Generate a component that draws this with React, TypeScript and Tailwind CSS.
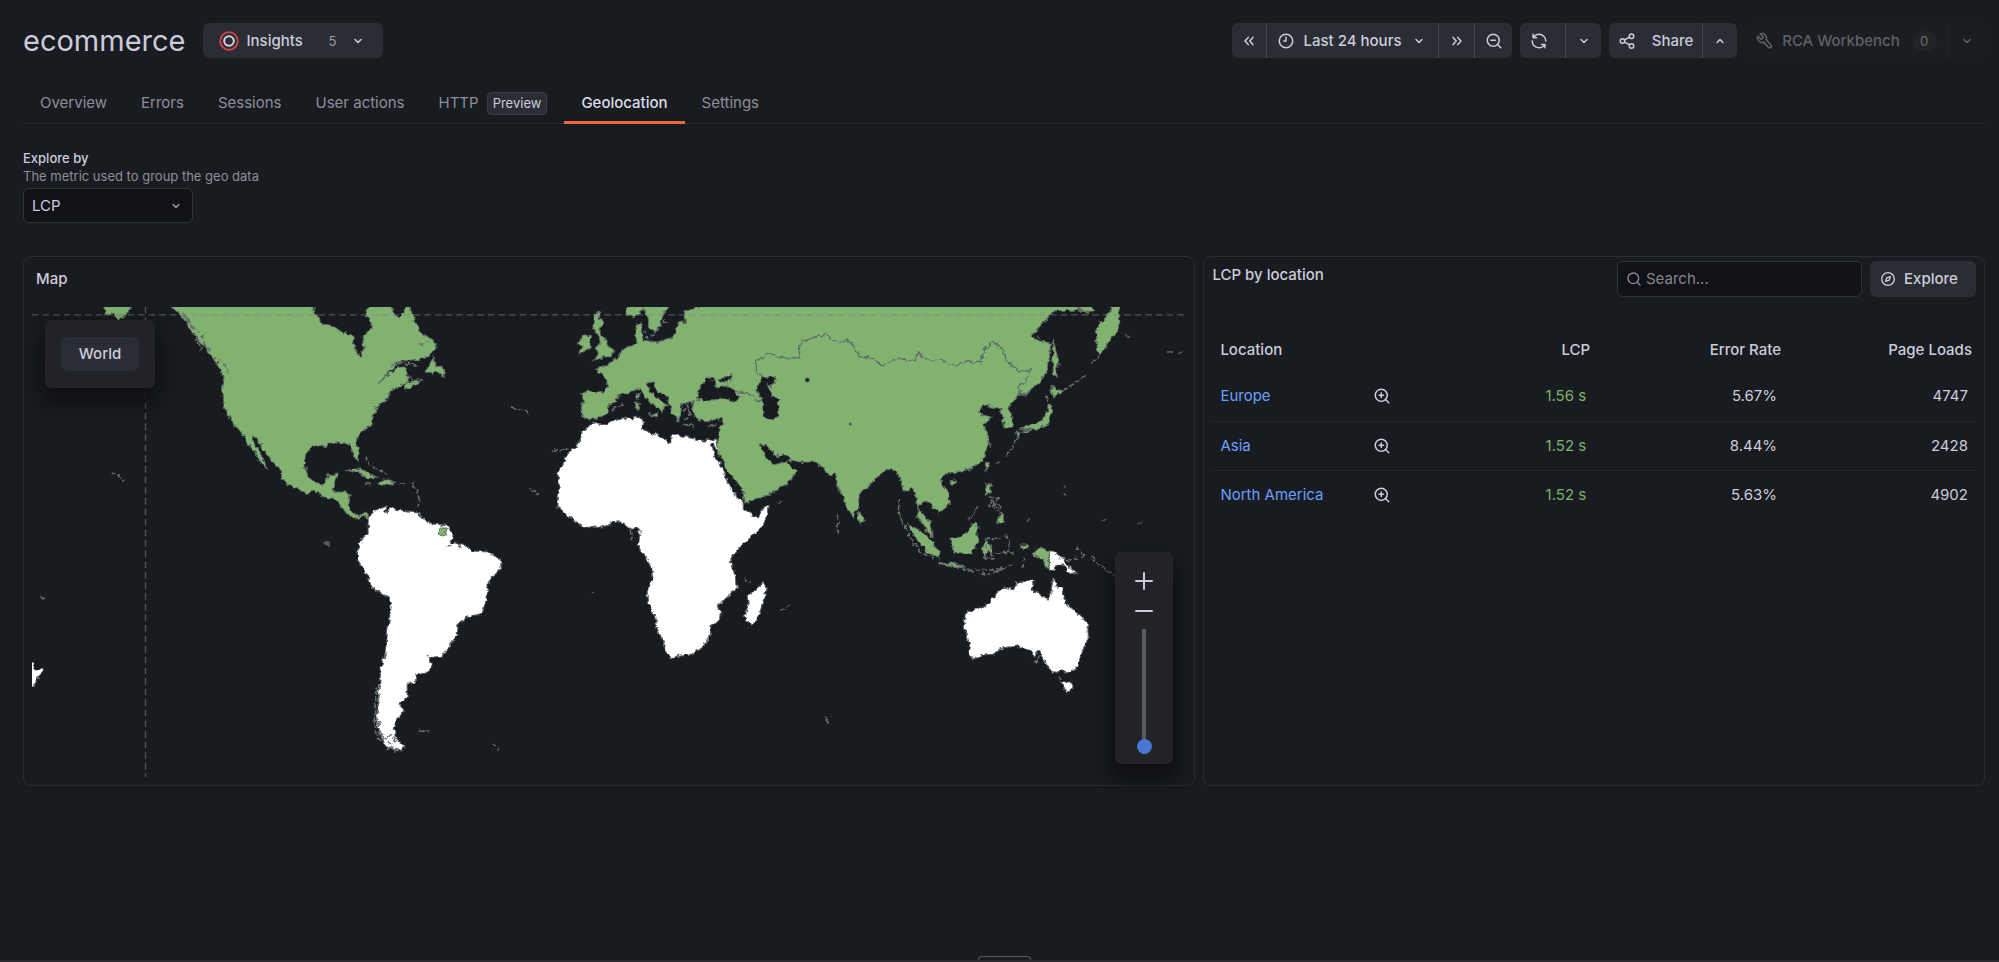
import { useState, type ReactNode } from 'react';

/* ---------- Icons ---------- */

type IconProps = { className?: string };

function Icon({ className = 'size-[18px]', children, width = 2 }: IconProps & { children: ReactNode; width?: number }) {
  return (
    <svg
      viewBox="0 0 24 24"
      className={`shrink-0 ${className}`}
      fill="none"
      stroke="currentColor"
      strokeWidth={width}
      strokeLinecap="round"
      strokeLinejoin="round"
      aria-hidden="true"
    >
      {children}
    </svg>
  );
}

const AngleDown = ({ className }: IconProps) => (
  <Icon className={className}><path d="M8 10 12 14l4-4" /></Icon>
);
const AngleUp = ({ className }: IconProps) => (
  <Icon className={className}><path d="M8 14 12 10l4 4" /></Icon>
);
const DoubleLeft = () => (
  <Icon><path d="M11 7.2 6.7 12l4.3 4.8M17.3 7.2 13 12l4.3 4.8" /></Icon>
);
const DoubleRight = () => (
  <Icon><path d="M13 7.2l4.3 4.8-4.3 4.8M6.7 7.2 11 12l-4.3 4.8" /></Icon>
);
const Clock = () => (
  <Icon><circle cx="12" cy="12" r="9" /><path d="M12 7v5H9" /></Icon>
);
const ZoomOut = () => (
  <Icon><circle cx="11" cy="11" r="8" /><path d="M21 21l-4.3-4.3M8 11h6" /></Icon>
);
const ZoomIn = () => (
  <Icon><circle cx="11" cy="11" r="8" /><path d="M21 21l-4.3-4.3M8 11h6M11 8v6" /></Icon>
);
const SearchIcon = ({ className }: IconProps) => (
  <Icon className={className}><circle cx="11" cy="11" r="8" /><path d="M21 21l-4.3-4.3" /></Icon>
);
const Sync = () => (
  <svg viewBox="0 0 24 24" className="size-[18px] shrink-0" fill="currentColor" aria-hidden="true">
    <path d="M19.91,15.51H15.38a1,1,0,0,0,0,2h2.4A8,8,0,0,1,4,12a1,1,0,1,0-2,0,10,10,0,0,0,16.88,7.23V21a1,1,0,0,0,2,0V16.5A1,1,0,0,0,19.91,15.51ZM12,2A10,10,0,0,0,5.12,4.77V3a1,1,0,0,0-2,0V7.5a1,1,0,0,0,1,1h4.5a1,1,0,0,0,0-2H6.22A8,8,0,0,1,20,12a1,1,0,0,0,2,0A10,10,0,0,0,12,2Z" />
  </svg>
);
const Share = () => (
  <Icon>
    <circle cx="18" cy="5.5" r="3" /><circle cx="6" cy="12" r="3" /><circle cx="18" cy="18.5" r="3" />
    <path d="M8.7 10.6l6.6-3.6M8.7 13.4l6.6 3.6" />
  </Icon>
);
const Wrench = () => (
  <Icon>
    <path d="M9.3 6.3a1 1 0 0 1 0 1.4L7.7 9.3a1 1 0 0 1-1.4 0L2.5 5.5a6 6 0 0 0 7.5 8l6.6 6.9a2 2 0 0 0 3.2-3L13.5 10a6 6 0 0 0-8-7.5z" />
  </Icon>
);
const Compass = () => (
  <Icon className="size-4">
    <circle cx="12" cy="12" r="9.5" /><path d="M15.6 8.4l-1.8 5.4-5.4 1.8 1.8-5.4z" />
  </Icon>
);
const Plus = () => <Icon className="size-6"><path d="M4 12h16M12 4v16" /></Icon>;
const Minus = () => <Icon className="size-6"><path d="M4 12h16" /></Icon>;
const Target = () => (
  <svg viewBox="0 0 20 20" className="size-5 shrink-0" fill="none" aria-hidden="true">
    <circle cx="10" cy="10" r="8.8" stroke="#d8434e" strokeWidth="1.8" />
    <circle cx="10" cy="10" r="4.8" stroke="#d5d5e2" strokeWidth="2" />
  </svg>
);

/* ---------- World map ---------- */

const GREEN = [
  // Alaska
  '105,300 132,300 132,307 126,314 123,319 118,319 115,314 105,315',
  // North and Central America
  '168,300 172,307 175,310 183,318 192,332 203,345 212,357 220,368 224,377 222,393 223,405 228,415 235,427 243,433 249,445 255,453 261,463 267,469 262,455 253,442 251,437 257,439 263,450 273,462 282,472 281,479 290,486 308,493 315,491 325,497 337,500 343,510 350,516 358,519 363,515 368,519 368,515 365,512 358,516 352,512 348,507 350,495 345,492 333,492 335,482 338,474 328,475 325,483 317,484 308,477 304,465 306,453 313,446 327,446 328,443 347,443 352,447 353,455 358,461 359,453 356,443 357,437 363,430 372,425 373,415 378,405 388,399 390,392 400,386 408,382 408,377 406,372 408,367 400,367 390,373 378,384 391,370 402,361 423,359 433,353 436,348 435,343 428,337 420,333 417,327 414,317 409,307 409,300 406,300 404,314 398,317 393,313 392,300 369,300 366,314 371,322 371,328 367,334 362,337 364,348 361,357 355,350 353,336 343,333 330,325 321,324 318,315 314,314 314,300',
  // Newfoundland, Nova Scotia
  '433,355 430,364 425,372 440,373 444,377 444,368 437,365 434,362',
  '403,388 406,390 415,385 423,379 413,382 406,384',
  // Cuba, Hispaniola
  '345,472 353,468 363,470 378,478 368,478 360,473 350,471',
  '378,484 383,480 390,480 396,483 388,485',
  // French Guiana
  '440,526 447,529 445,536 439,535',
  // Great Britain, Ireland
  '593,314 600,313 599,319 603,323 599,330 605,340 608,346 614,350 612,357 603,357 593,361 598,353 595,349 600,343 599,337 595,333 593,325',
  '580,339 584,335 590,335 591,348 579,354 582,347 578,344',
  // Scandinavia
  '627,300 627,315 633,318 640,313 643,307 647,318 650,330 655,332 660,327 662,317 668,307 668,300',
  // Eurasia
  '581,393 583,391 605,392 607,380 595,369 603,367 614,360 625,348 637,343 635,333 637,324 642,323 641,332 642,340 650,341 655,343 673,337 677,324 682,320 685,324 684,312 698,307 700,300 1090,300 1093,312 1078,310 1053,311 1040,327 1031,336 1038,342 1047,340 1050,345 1048,368 1040,382 1027,393 1019,395 1013,402 1007,408 1013,417 1012,425 1004,428 1003,417 1000,408 990,407 988,403 977,412 983,415 992,417 982,425 988,435 989,445 982,460 970,469 953,473 945,474 940,480 948,493 949,505 938,513 930,503 922,500 918,508 920,513 928,519 931,526 933,537 925,530 918,517 917,500 912,488 904,492 902,482 895,472 892,468 882,473 867,487 859,493 858,508 852,517 843,500 837,483 835,472 830,476 817,462 797,462 786,459 787,463 797,471 788,483 768,495 745,502 742,490 727,470 717,450 717,438 722,423 722,418 710,421 698,420 693,413 693,406 692,400 687,403 680,404 682,413 678,421 672,413 669,403 667,397 655,388 653,382 647,383 650,392 660,400 668,407 664,407 663,413 659,408 647,400 638,388 630,393 620,393 618,398 609,405 608,412 603,417 590,420 583,416 581,408 583,400',
  // Sardinia, Corsica, Sicily, Crete, Cyprus
  '636,394 639,393 639,399 637,399', '635,402 639,402 639,409 636,409', '648,414 657,414 656,418',
  '683,424 692,425 692,426 683,425', '709,426 716,425 713,427',
  // Sri Lanka
  '859,511 864,520 860,524 858,518',
  // Sumatra, Java
  '907,525 915,527 928,538 939,552 939,559 927,552 917,540', '939,562 957,564 966,568 952,567 940,565',
  // Borneo, Sulawesi
  '950,538 960,537 968,530 974,522 979,527 976,532 978,540 971,554 953,552', '982,547 986,540 990,546 992,555 987,551 984,559',
  // Hainan, Taiwan, Philippines
  '949,481 955,480 953,484 949,484', '987,461 989,463 986,471 984,466', '986,483 990,484 989,493 985,495', '998,517 1003,514 1003,523 997,522',
  // Western New Guinea
  '1032,553 1040,547 1049,551 1049,569 1045,567 1043,560 1032,554', '1019,545 1027,545 1027,549 1021,548',
  // Sakhalin, Kamchatka
  '1053,340 1056,353 1059,365 1055,367 1057,378 1053,374 1052,350', '1112,307 1114,300 1119,300 1118,330 1114,336 1108,343 1099,356 1096,345 1095,332 1098,324 1106,318',
  // Japan
  '1051,384 1056,389 1063,391 1055,397 1050,393', '1048,402 1052,408 1048,424 1033,430 1018,429 1033,424 1042,420 1047,412', '1015,431 1020,432 1017,439', '1023,431 1029,430 1025,433',
];

const WHITE = [
  // South America
  '368,518 375,510 385,506 386,513 390,507 398,510 418,512 420,516 432,524 447,525 453,536 451,542 467,546 472,551 487,552 500,559 501,568 488,582 487,597 482,613 468,617 458,624 457,635 447,648 442,657 435,658 428,656 432,665 427,673 416,674 415,683 407,683 407,697 399,704 404,711 398,718 394,727 395,737 405,747 397,751 385,745 379,732 376,718 377,707 379,690 381,667 385,653 388,627 391,607 389,598 373,588 365,572 357,560 358,550 358,543 368,533',
  // Africa
  '592,423 603,425 615,420 640,417 643,421 641,429 655,434 670,443 673,434 690,438 705,441 715,439 718,450 716,450 713,443 710,444 716,458 725,475 732,492 743,502 743,510 758,518 763,508 769,506 767,517 758,530 737,550 735,551 730,561 735,575 736,590 727,597 717,606 720,613 719,620 711,625 710,635 702,648 692,654 680,655 670,658 666,653 664,642 657,630 654,613 647,600 647,590 653,577 648,559 638,547 640,530 637,528 627,528 623,522 615,522 603,527 595,526 585,528 570,518 558,507 557,495 559,488 558,472 568,453 579,443 582,433 590,425',
  // Madagascar
  '763,581 766,590 757,622 750,624 744,617 748,605 747,595 757,590',
  // Papua
  '1049,551 1063,558 1070,569 1077,574 1070,573 1063,565 1055,566 1055,570 1049,571',
  // Australia, Tasmania
  '1053,577 1057,587 1062,588 1065,603 1077,613 1087,623 1088,637 1080,657 1076,669 1066,673 1060,670 1057,673 1047,668 1043,658 1040,650 1033,657 1028,649 1017,646 1002,648 993,654 982,655 975,659 968,655 970,647 964,627 965,613 988,604 995,595 1005,587 1013,590 1017,582 1034,581 1032,590 1048,599 1051,590',
  '1061,682 1072,682 1071,690 1066,693',
  // New Zealand
  '28,662 33,664 35,670 43,669 39,677 34,686 28,688',
];

const SEAS = [
  '697,397 700,387 707,378 715,380 716,387 725,386 732,388 739,397 737,402 723,398 703,402',
  '718,380 724,377 732,375 727,383 720,383',
  '762,378 775,377 774,383 767,387 772,395 780,400 777,403 778,418 770,419 762,415 763,405 756,387',
  '759,444 765,445 775,456 786,455 790,461 772,465 766,457',
];

const BORDER =
  'M762 378 755 368 757 361 768 353 783 358 800 358 798 352 801 342 825 334 832 341 840 343 848 340 860 357 870 357 882 366 898 358 915 362 917 352 930 361 942 360 953 366 967 361 980 363 985 347 993 343 1002 348 1007 363 1017 368 1018 372 1030 370 1025 383 1018 385 1019 395M735 391 750 395 760 401';

// Archipelagos and ragged coasts that are too small to be filled
const ISLES =
  'M184 314 190 325 197 330 203 338 205 347 210 350M195 336 200 346 201 350M187 317 194 327M212 357 221 361 228 369 227 374M112 472 118 474 124 480M365 484h7M400 484h6M412 485 417 488 419 500 418 507M366 456 368 465 378 470 387 474M511 408 524 411 531 414M553 450 560 451 567 448M531 489 538 494 533 495M392 365 401 363 416 365M410 378 420 381M420 344 428 341M419 732 429 731M420 730 428 732M492 744 498 748M377 690 375 705 374 722 378 738 388 748 402 751M379 695 377 715 381 735 391 744M380 735 392 736 396 741M448 547 456 541 460 547M643 330 648 337 644 338M651 335 656 333M664 320 667 325M612 409 622 406M686 405 690 415 684 420M684 410 692 408M690 402 700 400M837 516 838 532M899 499 898 510 901 520 912 540 920 552 932 558M941 564 966 570 1000 570 1010 566M980 574 990 575 1002 569M978 508 968 520M990 497 998 499 993 504 1001 506 996 512 1002 514M992 500 988 505 997 508M985 539 1000 538M985 546 993 558 984 558M1006 535 1009 544 1007 555M996 552 1014 553M1025 557 1022 567M1060 559 1070 560 1078 558 1084 555M1076 548 1086 556M1091 557 1100 566 1114 575M1026 395 1018 390M1063 390 1075 383 1084 376M1092 363 1098 357M1126 334 1129 338M1168 352h4M1178 352h6M1047 396 1046 402M1015 440 1006 458M996 463h6M1038 336 1043 342M1078 309 1090 313M1060 679 1058 677M1036 661 1040 655M825 718 829 722M777 502h4M744 578 750 582M40 597l6 2M630 530 632 540M1064 486l1 1M1064 494l0 1M1029 518l-2 3M1104 520h1M1138 524l5-4M591 593h1M781 609h3M788 606h2M324 543h6M325 545h5';

function WorldMap() {
  return (
    <svg
      viewBox="32 307 1152 470"
      preserveAspectRatio="xMidYMid slice"
      className="block h-[470px] w-full"
      role="img"
      aria-label="World map coloured by LCP"
    >
      <defs>
        <filter id="coast" x="20" y="290" width="1180" height="500" filterUnits="userSpaceOnUse" colorInterpolationFilters="sRGB">
          <feTurbulence type="fractalNoise" baseFrequency="0.2" numOctaves="2" seed="4" result="noise" />
          <feDisplacementMap in="SourceGraphic" in2="noise" scale="6" xChannelSelector="R" yChannelSelector="G" />
        </filter>
      </defs>
      <g filter="url(#coast)" strokeLinejoin="round" strokeLinecap="round">
        <g fill="#ffffff" stroke="#60686b" strokeWidth="1">
          {WHITE.map((points) => <polygon key={points} points={points} />)}
        </g>
        <g fill="#81b270" stroke="#5d6a63" strokeWidth="1">
          {GREEN.map((points) => <polygon key={points} points={points} />)}
        </g>
        <g fill="#181b1f" stroke="#5d6a63" strokeWidth="1">
          {SEAS.map((points) => <polygon key={points} points={points} />)}
        </g>
        <path d={BORDER} fill="none" stroke="#5d686a" strokeWidth="1.2" />
        <path d={ISLES} fill="none" stroke="#667070" strokeWidth="1.6" strokeDasharray="4 3" />
      </g>
      <circle cx="807" cy="380" r="2" fill="#181b1f" stroke="#4c5c50" />
      <circle cx="850" cy="424" r="1.5" fill="#4c5c50" />
      <path d="M32 315H1184M145.5 307V777" stroke="#7d8289" strokeOpacity="0.55" strokeWidth="1.4" strokeDasharray="6.6 4" />
    </svg>
  );
}

/* ---------- Page ---------- */

const TABS = ['Overview', 'Errors', 'Sessions', 'User actions', 'HTTP', 'Geolocation', 'Settings'];

const ROWS = [
  { location: 'Europe', lcp: '1.56 s', errorRate: '5.67%', loads: '4747' },
  { location: 'Asia', lcp: '1.52 s', errorRate: '8.44%', loads: '2428' },
  { location: 'North America', lcp: '1.52 s', errorRate: '5.63%', loads: '4902' },
];

const group = 'flex h-[35px] divide-x divide-[#45474f] overflow-hidden rounded-md bg-[#2b2d34]';
const cell = 'flex items-center justify-center font-medium';

function Header() {
  return (
    <header className="flex flex-wrap items-center justify-between gap-4">
      <div className="flex items-center gap-[17px]">
        <h1 className="text-[29px] leading-[35px]">ecommerce</h1>
        <button type="button" className="flex h-[35px] w-[180px] items-center rounded-md bg-[#2b2d34] px-4 font-medium">
          <Target />
          <span className="ml-2">Insights</span>
          <span className="ml-auto text-[13px] font-normal text-[#9a9ba8]">5</span>
          <AngleDown className="ml-3 size-[18px]" />
        </button>
      </div>
      <div className="flex flex-wrap items-center gap-2">
        <div className={group}>
          <button type="button" className={`${cell} w-[35px]`} aria-label="Move time range backwards"><DoubleLeft /></button>
          <button type="button" className={`${cell} w-[172px] gap-2`}>
            <Clock />Last 24 hours<AngleDown />
          </button>
          <button type="button" className={`${cell} w-9`} aria-label="Move time range forwards"><DoubleRight /></button>
          <button type="button" className={`${cell} w-[37px]`} aria-label="Zoom out time range"><ZoomOut /></button>
        </div>
        <div className={group}>
          <button type="button" className={`${cell} w-[46px] pr-2`} aria-label="Refresh"><Sync /></button>
          <button type="button" className={`${cell} w-[35px]`} aria-label="Refresh interval"><AngleDown /></button>
        </div>
        <div className={group}>
          <button type="button" className={`${cell} w-[94px] gap-4`}><Share />Share</button>
          <button type="button" className={`${cell} w-[34px]`} aria-label="Share options"><AngleUp /></button>
        </div>
        <div className="flex h-[35px] divide-x divide-[#202328] rounded-md bg-[#1a1d21] text-[#5f6167]">
          <button type="button" disabled className={`${cell} w-[204px] gap-2`}>
            <Wrench />RCA Workbench
            <span className="ml-1 flex h-5 w-[25px] items-center justify-center rounded-full bg-[#202328] text-[13px]">0</span>
          </button>
          <button type="button" disabled className={`${cell} w-9`} aria-label="Workbench options"><AngleDown /></button>
        </div>
      </div>
    </header>
  );
}

function Tabs() {
  return (
    <nav className="mt-[27px] flex h-[39px] border-b border-[#2a2c32]">
      {TABS.map((tab) => {
        const active = tab === 'Geolocation';
        return (
          <a
            key={tab}
            href={`#${tab.toLowerCase().replace(' ', '-')}`}
            aria-current={active ? 'page' : undefined}
            className={
              active
                ? '-mb-px flex items-center border-b-[3px] border-[#f4663a] px-[17px] font-medium text-[#dcdce8]'
                : '-mb-px flex items-center border-b-[3px] border-transparent px-[17px] text-[#8e8f9b]'
            }
          >
            {tab}
            {tab === 'HTTP' && (
              <span className="ml-2 flex h-[23px] items-center rounded-[4px] border border-[#3b3d44] bg-[#2b2d34] px-[5px] text-[13px] text-[#ccccdc]">
                Preview
              </span>
            )}
          </a>
        );
      })}
    </nav>
  );
}

function MapPanel() {
  const [zoom, setZoom] = useState(0);
  return (
    <section className="rounded-lg border border-[#2a2c32] pb-2 pl-2 pr-[10px]">
      <h2 className="flex h-[50px] items-center px-1 pb-[6px] font-medium">Map</h2>
      <div className="relative">
        <WorldMap />
        <div className="absolute left-[13px] top-[13px] rounded-md bg-[#212328] px-4 py-[17px] shadow-[0_13px_20px_4px_#0f1014]">
          <button type="button" className="flex h-[34px] w-[78px] items-center justify-center rounded-md bg-[#2b2d34] font-medium">
            World
          </button>
        </div>
        <div className="absolute bottom-[13px] right-[11px] flex h-[212px] w-[58px] flex-col items-center rounded-md bg-[#212328] pt-[17px] shadow-[0_13px_20px_4px_#0f1014]">
          <button type="button" aria-label="Zoom in" onClick={() => setZoom((z) => Math.min(100, z + 10))}><Plus /></button>
          <button type="button" className="mt-[6px]" aria-label="Zoom out" onClick={() => setZoom((z) => Math.max(0, z - 10))}><Minus /></button>
          <input
            type="range"
            aria-label="Zoom level"
            min={0}
            max={100}
            value={zoom}
            onChange={(e) => setZoom(Number(e.target.value))}
            className="mt-[6px] h-[125px] w-[15px] appearance-none bg-[linear-gradient(#565b5f,#565b5f)] bg-[length:4px_100%] bg-center bg-no-repeat [direction:rtl] [writing-mode:vertical-lr] [&::-webkit-slider-thumb]:size-[15px] [&::-webkit-slider-thumb]:appearance-none [&::-webkit-slider-thumb]:rounded-full [&::-webkit-slider-thumb]:bg-[#4a77d4]"
          />
        </div>
      </div>
    </section>
  );
}

function LocationPanel() {
  return (
    <section className="rounded-lg border border-[#2a2c32] px-2 pt-1">
      <div className="flex items-start gap-2">
        <h2 className="mt-1 flex-1 font-medium leading-5">LCP by location</h2>
        <label className="flex h-9 w-[245px] items-center gap-1 rounded-md border border-[#303239] bg-[#111217] px-2">
          <SearchIcon className="size-4 text-[#8e8f9b]" />
          <input
            type="search"
            aria-label="Search locations"
            placeholder="Search..."
            className="min-w-0 flex-1 bg-transparent outline-none placeholder:text-[#85868f]"
          />
        </label>
        <button type="button" className="flex h-9 w-[106px] items-center gap-2 rounded-md bg-[#2b2d34] pl-[10px] font-medium">
          <Compass />Explore
        </button>
      </div>
      <table className="mt-[31px] w-full table-fixed border-collapse">
        <colgroup>
          <col className="w-[20%]" />
          <col className="w-[6%]" />
          <col className="w-[24%]" />
          <col className="w-[25%]" />
          <col className="w-[25%]" />
        </colgroup>
        <thead>
          <tr className="h-11">
            <th className="px-2 text-left font-medium">Location</th>
            <th aria-label="Drill down" />
            <th className="px-1 text-right font-medium">LCP</th>
            <th className="px-1 text-right font-medium">Error Rate</th>
            <th className="px-1 text-right font-medium">Page Loads</th>
          </tr>
        </thead>
        <tbody>
          {ROWS.map((row) => (
            <tr key={row.location} className="h-[49px] border-b border-[#24262b] last:border-0">
              <td className="whitespace-nowrap px-2">
                <a href={`#${row.location}`} className="text-[#6e9fff]">{row.location}</a>
              </td>
              <td className="px-2">
                <button type="button" className="flex" aria-label={`Zoom in to ${row.location}`}><ZoomIn /></button>
              </td>
              <td className="px-2 text-right text-[#7eb26d]">{row.lcp}</td>
              <td className="px-2 text-right">{row.errorRate}</td>
              <td className="px-2 text-right">{row.loads}</td>
            </tr>
          ))}
        </tbody>
      </table>
    </section>
  );
}

export default function App() {
  return (
    <div className="flex min-h-screen flex-col border-b-2 border-[#2a2c32] bg-[#181b1f] pl-[23px] pr-[14px] pt-[23px] font-['Inter',sans-serif] text-[15px] leading-5 text-[#ccccdc]">
      <Header />
      <Tabs />
      <div className="mt-[25px] flex flex-col items-start text-[13px] leading-[18px]">
        <label htmlFor="metric" className="font-medium">Explore by</label>
        <p className="text-[#8e8f9b]">The metric used to group the geo data</p>
        <div className="mt-[3px] grid items-center">
          <select
            id="metric"
            className="col-start-1 row-start-1 h-[35px] w-[170px] appearance-none rounded-md border border-[#303239] bg-[#111217] px-2 text-[15px]"
          >
            <option>LCP</option>
          </select>
          <AngleDown className="pointer-events-none col-start-1 row-start-1 mr-2 size-[18px] justify-self-end text-[#9a9ba8]" />
        </div>
      </div>
      <main className="mt-[33px] grid grid-cols-[3fr_2fr] gap-2">
        <MapPanel />
        <LocationPanel />
      </main>
      <div className="mt-auto flex justify-center">
        <button type="button" aria-label="Open drawer" className="h-1 w-[53px] rounded-t-sm border border-b-0 border-[#5b5d66]" />
      </div>
    </div>
  );
}
